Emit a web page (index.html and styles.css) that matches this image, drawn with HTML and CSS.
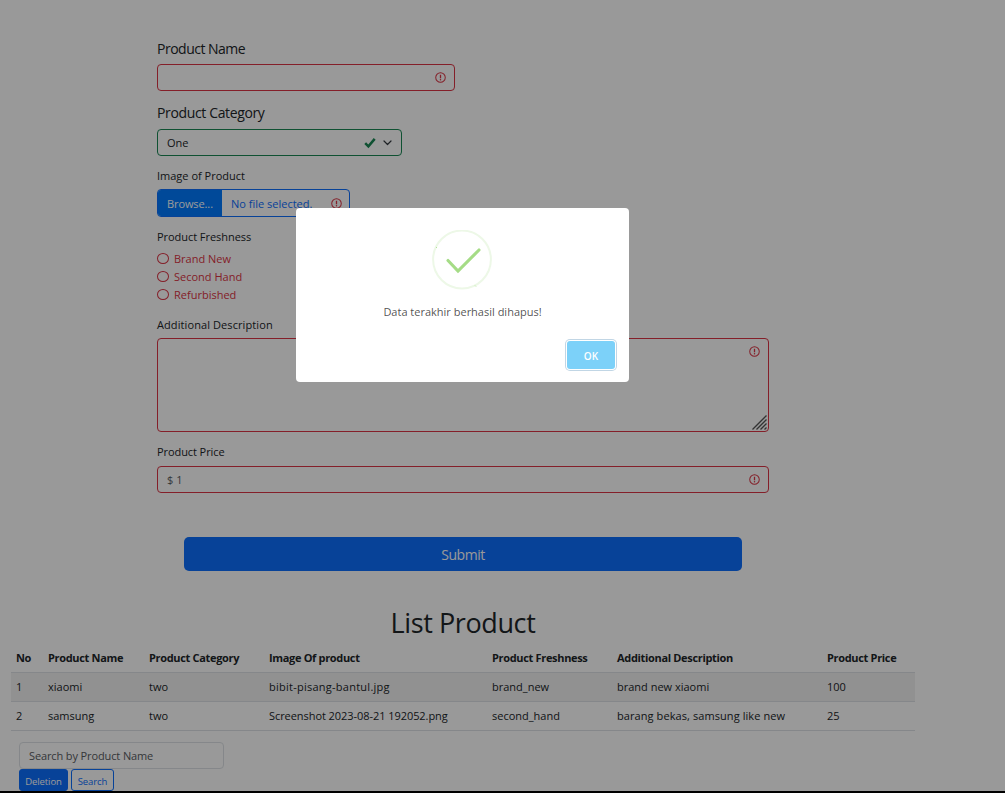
FILE: index.html
```
<!DOCTYPE html>
<html lang="id">
<head>
<meta charset="utf-8">
<title>List Product</title>
<link rel="stylesheet" href="styles.css">
</head>
<body>
<svg class="defs" width="0" height="0">
  <symbol id="alert" viewBox="0 0 12 12">
    <circle cx="6" cy="6" r="5.2" fill="none" stroke="#dc3545" stroke-width="1.1"/>
    <path d="M6 3v3.900" stroke="#dc3545" stroke-width="1.4"/>
    <circle cx="6" cy="8.5" r=".8" fill="#dc3545"/>
  </symbol>
</svg>
<div class="page">
  <form class="form">
    <div class="field name">
      <label class="label large">Product Name</label>
      <div class="control invalid"><svg class="alert"><use href="#alert"/></svg></div>
    </div>
    <div class="field category">
      <label class="label large">Product Category</label>
      <div class="control valid"><span class="value">One</span>
        <svg class="tick" viewBox="0 0 12 12"><path d="M1.2 6.2 4.4 9.4 10.7 1.9" fill="none" stroke="#198754" stroke-width="2.5"/></svg>
        <svg class="chevron" viewBox="0 0 9 6"><path d="M1 1l3.500 3.500L8 1" fill="none" stroke="#343a40" stroke-width="1.2" stroke-linecap="round" stroke-linejoin="round"/></svg>
      </div>
    </div>
    <div class="field image">
      <label class="label">Image of Product</label>
      <div class="control file"><span class="browse">Browse...</span><span class="filename">No file selected.</span><svg class="alert"><use href="#alert"/></svg></div>
    </div>
    <div class="field freshness">
      <label class="label">Product Freshness</label>
      <div class="radio"><i class="dot"></i><span>Brand New</span></div>
      <div class="radio"><i class="dot"></i><span>Second Hand</span></div>
      <div class="radio"><i class="dot"></i><span>Refurbished</span></div>
    </div>
    <div class="field description">
      <label class="label wide">Additional Description</label>
      <div class="control invalid area"><svg class="alert"><use href="#alert"/></svg>
        <svg class="grip" viewBox="0 0 15 15"><path d="M.5 14.5 14.5.5M4.5 14.5l10-10M8.5 14.5l6-6M12.5 14.5l2-2" stroke="#555" stroke-width="1.3"/></svg>
      </div>
    </div>
    <div class="field price">
      <label class="label">Product Price</label>
      <div class="control invalid"><span class="placeholder">$ 1</span><svg class="alert"><use href="#alert"/></svg></div>
    </div>
    <button type="button" class="submit">Submit</button>
  </form>

  <h1 class="title">List Product</h1>
  <table class="products">
    <colgroup><col class="c-no"><col class="c-name"><col class="c-cat"><col class="c-img"><col class="c-fresh"><col class="c-desc"><col class="c-price"></colgroup>
    <thead><tr><th>No</th><th>Product Name</th><th>Product Category</th><th>Image Of product</th><th>Product Freshness</th><th>Additional Description</th><th>Product Price</th></tr></thead>
    <tbody>
      <tr><td>1</td><td>xiaomi</td><td>two</td><td class="loose">bibit-pisang-bantul.jpg</td><td>brand_new</td><td>brand new xiaomi</td><td>100</td></tr>
      <tr><td>2</td><td>samsung</td><td>two</td><td class="tight">Screenshot 2023-08-21 192052.png</td><td>second_hand</td><td class="note">barang bekas, samsung like new</td><td>25</td></tr>
    </tbody>
  </table>
  <div class="tools">
    <div class="control search"><span class="placeholder">Search by Product Name</span></div>
    <div class="actions"><button type="button" class="small solid">Deletion</button><button type="button" class="small outline">Search</button></div>
  </div>

  <div class="overlay">
    <div class="modal">
      <svg class="success" viewBox="0 0 60 60">
        <circle cx="30" cy="29.5" r="28.9" fill="none" stroke="#edf8e7" stroke-width="2"/>
        <path d="M16 30.500 26 41 47 20" fill="none" stroke="#a5dc86" stroke-width="3.100" stroke-linecap="round"/>
        <path d="M4 17l1 1M43 55.500l1 1" stroke="#a5dc86" stroke-width=".8"/>
      </svg>
      <p class="message">Data terakhir berhasil dihapus!</p>
      <div class="footer"><button type="button" class="ok">OK</button></div>
    </div>
  </div>
</div>
</body>
</html>
```
FILE: styles.css
```
* { box-sizing: border-box; }
body { margin: 0; background: #000; font: 11px "Open Sans", "Noto Sans", sans-serif; color: #212529; }
button { font-family: inherit; padding: 0; border: 0; }
.defs { display: block; }
.page { position: relative; height: 791px; background: #fff; overflow: hidden; }

.form { display: flex; flex-direction: column; margin-left: 157px; padding-top: 35px; width: 612px; }
.label { display: block; height: 26px; line-height: 26px; }
.label.large { font-size: 14px; letter-spacing: -.5px; height: 29px; line-height: 27px; }
.label.wide { letter-spacing: .09px; }
.control { display: flex; align-items: center; height: 27px; padding: 0 9px; border: 1px solid #dee2e6; border-radius: 4px; white-space: nowrap; }
.invalid { border-color: #dc3545; }
.valid { border-color: #198754; color: #212529; }
.alert { width: 11px; height: 11px; margin-left: auto; flex: none; }
.placeholder { color: #595c5f; }
.search .placeholder { letter-spacing: -.12px; }

.name { width: 298px; }
.name .control, .price .control { padding-right: 8px; }
.category { width: 245px; margin-top: 8px; }
.category .label.large { height: 30px; letter-spacing: -.36px; }
.tick { width: 12px; height: 12px; margin-left: auto; }
.chevron { width: 9px; height: 6px; margin: 0 0 0 7px; }
.image { width: 193px; margin-top: 7px; }
.file { height: 28px; border-color: #0d6efd; color: #0d6efd; padding: 0 7px 0 0; }
.browse { align-self: stretch; width: 64px; padding-left: 9px; line-height: 27px; background: #007bff; color: #fff; border-radius: 3px 0 0 3px; letter-spacing: -.1px; }
.filename { padding-left: 9px; line-height: 27px; }
.freshness { margin-top: 9px; }
.freshness .label { height: 23px; line-height: 22px; letter-spacing: -.05px; }
.radio { display: flex; align-items: center; height: 18px; gap: 5px; color: #dc3545; }
.dot { width: 12px; height: 11px; border: 1px solid #dc3545; border-radius: 50%; }
.description { margin-top: 9px; }
.area { position: relative; height: 94px; align-items: flex-start; padding: 7px 8px 0; }
.grip { position: absolute; right: 1px; bottom: 1px; width: 15px; height: 15px; }
.price { margin-top: 6px; }
.price .label { height: 28px; line-height: 28px; letter-spacing: -.08px; }
.submit { width: 558px; height: 34px; margin: 44px 0 0 27px; background: #0d6efd; color: #fff; border-radius: 5px; font-size: 14px; letter-spacing: -.45px; line-height: 36px; }

.title { width: 926px; height: 40px; margin: 32px 0 0; line-height: 40px; text-align: center; font-size: 27px; letter-spacing: -.4px; font-weight: 400; }
.products { width: 904px; margin-left: 11px; table-layout: fixed; border-collapse: separate; border-spacing: 0; }
.products th, .products td { height: 29px; padding: 0 5px 1px; border-bottom: 1px solid #dee2e6; text-align: left; white-space: nowrap; }
.products th { height: 30px; padding-bottom: 0; font-weight: 700; letter-spacing: -.33px; }
.products .loose { letter-spacing: .25px; }
.products .tight { letter-spacing: -.06px; }
.products .note { letter-spacing: .08px; }
.products tbody tr:first-child { background: #f2f2f2; }
.c-no { width: 32px; }
.c-name { width: 101px; }
.c-cat { width: 120px; }
.c-img { width: 223px; }
.c-fresh { width: 125px; }
.c-desc { width: 210px; }
.c-price { width: 93px; }
.tools { width: 205px; margin: 11px 0 0 19px; }
.actions { display: flex; gap: 3px; }
.small { height: 22px; border: 1px solid #0d6efd; border-radius: 3px; font-size: 9.5px; line-height: 23px; }
.solid { width: 49px; background: #0d6efd; color: #fff; letter-spacing: -.1px; }
.outline { width: 43px; background: transparent; color: #0d6efd; letter-spacing: -.1px; }

.overlay { position: absolute; inset: 0; background: rgba(0, 0, 0, .4); }
.modal { width: 333px; height: 174px; margin: 208px 0 0 296px; padding: 22px 14px 13px; display: flex; flex-direction: column; background: #fff; border-radius: 4px; }
.success { width: 60px; height: 60px; align-self: center; margin-left: -1px; }
.message { margin: 12px 0 0; line-height: 20px; text-align: center; color: rgba(0, 0, 0, .7); }
.footer { display: flex; justify-content: flex-end; margin-top: auto; }
.ok { width: 48px; height: 28px; background: #7cd1f9; color: #fff; border-radius: 3px; font-size: 10px; font-weight: 600; line-height: 30px; box-shadow: 0 0 0 1px #fff, 0 0 0 2px rgba(43, 114, 165, .29); }
```
